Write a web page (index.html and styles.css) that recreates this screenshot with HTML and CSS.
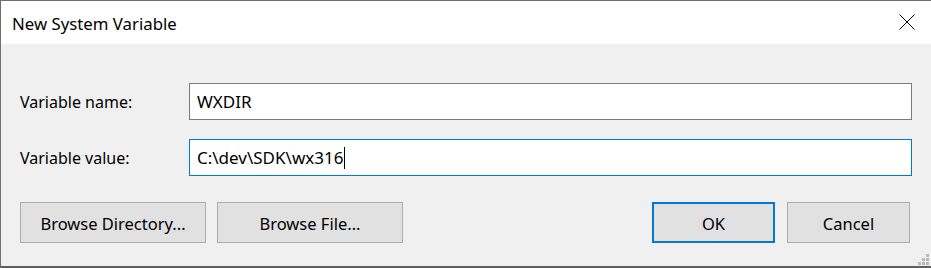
FILE: index.html
```html
<!DOCTYPE html>
<html lang="en">
<head>
    <meta charset="UTF-8">
    <meta name="viewport" content="width=device-width,initial-scale=1.0">
    <title>New System Variable</title>
    <link rel="stylesheet" href="styles.css">
</head>
<body>
    <div class="window">
        <div class="titlebar">
            <div class="title">New System Variable</div>
            <div class="close">
                <svg width="16" height="16" viewBox="0 0 16 16">
                    <path d="M0.5 0.5L15.5 15.5M15.5 0.5L0.5 15.5" stroke="#000" stroke-width="1" fill="none"/>
                </svg>
            </div>
        </div>
        <div class="content">
            <div class="fields">
                <label for="varName">Variable name:</label>
                <div class="field">WXDIR</div>
                <label for="varValue">Variable value:</label>
                <div class="field focused">C:\dev\SDK\wx316<span class="caret"></span></div>
            </div>
            <div class="buttons">
                <button class="btn wide">Browse Directory...</button>
                <button class="btn wide">Browse File...</button>
                <div class="spacer"></div>
                <button class="btn small default">OK</button>
                <button class="btn small">Cancel</button>
            </div>
        </div>
        <div class="grip">
            <span></span>
            <span></span><span></span>
            <span></span><span></span><span></span>
        </div>
    </div>
</body>
</html>
```

FILE: styles.css
```css
body,html{
    margin:0;
    padding:0;
    background-color:#f0f0f0;
    font-family:"Segoe UI","Noto Sans",sans-serif;
    font-size:16px;
    color:#000;
}
.window{
    position:relative;
    box-sizing:border-box;
    width:931px;
    height:268px;
    border-left:1px solid #6f6f6f;
    border-top:1px solid #6f6f6f;
    border-bottom:2px solid #5f5f5f;
    background-color:#f0f0f0;
}
.titlebar{
    display:flex;
    align-items:center;
    height:43px;
    background-color:#fff;
}
.title{
    padding-left:11px;
    padding-top:1px;
    font-size:16.8px;
}
.close{
    margin-left:auto;
    margin-right:16px;
    width:16px;
    height:16px;
    margin-top:-2px;
}
.close svg{
    display:block;
}
.content{
    padding:39px 19px 0 19px;
}
.fields{
    display:grid;
    grid-template-columns:169px 1fr;
    row-gap:19px;
    align-items:center;
}
.fields label{
    padding-top:1px;
}
.field{
    box-sizing:border-box;
    height:37px;
    display:flex;
    align-items:center;
    padding:0 7px;
    font-size:17px;
    background-color:#fff;
    border:1px solid #7a7a7a;
}
.field.focused{
    border-color:#0078d7;
}
.caret{
    display:inline-block;
    width:1px;
    height:22px;
    margin-left:1px;
    background-color:#000;
}
.buttons{
    display:flex;
    margin-top:26px;
    padding-right:2px;
    gap:11px;
}
.spacer{
    flex:1;
}
.btn{
    box-sizing:border-box;
    height:41px;
    padding:2px 0 0 0;
    font-family:inherit;
    font-size:16.5px;
    color:#000;
    background-color:#e1e1e1;
    border:1px solid #adadad;
}
.btn.wide{
    width:186px;
}
.btn.small{
    width:123px;
}
.btn.default{
    border:2px solid #0078d7;
    margin-right:1px;
}
.grip{
    position:absolute;
    right:2px;
    bottom:1px;
    width:11px;
    height:11px;
    display:grid;
    grid-template-columns:repeat(3,3px);
    grid-template-rows:repeat(3,3px);
    gap:1px;
}
.grip span{
    background-color:#b9b9b9;
}
.grip span:nth-child(1){
    grid-column:3;
    grid-row:1;
}
.grip span:nth-child(2){
    grid-column:2;
    grid-row:2;
}
.grip span:nth-child(3){
    grid-column:3;
    grid-row:2;
}
.grip span:nth-child(4){
    grid-column:1;
    grid-row:3;
}
.grip span:nth-child(5){
    grid-column:2;
    grid-row:3;
}
.grip span:nth-child(6){
    grid-column:3;
    grid-row:3;
}
```
